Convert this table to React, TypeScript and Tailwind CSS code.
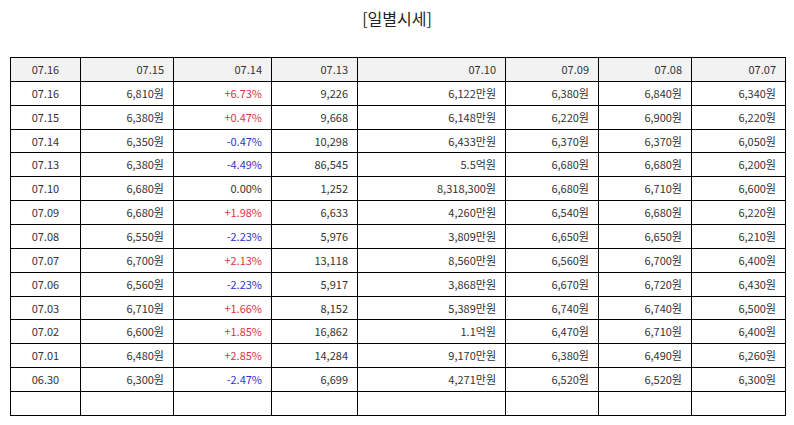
const head = ["07.16", "07.15", "07.14", "07.13", "07.10", "07.09", "07.08", "07.07"];

type Row = [string, string, string, string, string, string, string, string];

const rows: Row[] = [
  ["07.16", "6,810원", "+6.73%", "9,226", "6,122만원", "6,380원", "6,840원", "6,340원"],
  ["07.15", "6,380원", "+0.47%", "9,668", "6,148만원", "6,220원", "6,900원", "6,220원"],
  ["07.14", "6,350원", "-0.47%", "10,298", "6,433만원", "6,370원", "6,370원", "6,050원"],
  ["07.13", "6,380원", "-4.49%", "86,545", "5.5억원", "6,680원", "6,680원", "6,200원"],
  ["07.10", "6,680원", "0.00%", "1,252", "8,318,300원", "6,680원", "6,710원", "6,600원"],
  ["07.09", "6,680원", "+1.98%", "6,633", "4,260만원", "6,540원", "6,680원", "6,220원"],
  ["07.08", "6,550원", "-2.23%", "5,976", "3,809만원", "6,650원", "6,650원", "6,210원"],
  ["07.07", "6,700원", "+2.13%", "13,118", "8,560만원", "6,560원", "6,700원", "6,400원"],
  ["07.06", "6,560원", "-2.23%", "5,917", "3,868만원", "6,670원", "6,720원", "6,430원"],
  ["07.03", "6,710원", "+1.66%", "8,152", "5,389만원", "6,740원", "6,740원", "6,500원"],
  ["07.02", "6,600원", "+1.85%", "16,862", "1.1억원", "6,470원", "6,710원", "6,400원"],
  ["07.01", "6,480원", "+2.85%", "14,284", "9,170만원", "6,380원", "6,490원", "6,260원"],
  ["06.30", "6,300원", "-2.47%", "6,699", "4,271만원", "6,520원", "6,520원", "6,300원"],
];

const widths = ["w-[70px]", "w-[93px]", "w-[98px]", "w-[86px]", "w-[148px]", "w-[93px]", "w-[93px]", "w-[94px]"];

function rateColor(v: string) {
  if (v.startsWith("+")) return "text-[#e0333f]";
  if (v.startsWith("-")) return "text-[#3333cc]";
  return "text-[#333]";
}

function Cell({ value, col }: { value: string; col: number }) {
  const align = col === 0 ? "text-center" : "text-right pr-[9px]";
  const color = col === 2 ? rateColor(value) : "text-[#333]";
  return <td className={`border border-black h-[23.87px] p-0 leading-none ${align} ${color}`}>{value}</td>;
}

export default function App() {
  return (
    <div className="w-[794px] h-[425px] bg-white font-['Noto_Sans_CJK_KR','Noto_Sans',sans-serif] text-[#333]">
      <div className="pt-[7px] h-[57px] text-center text-[16px] text-[#222] leading-[22px]">[일별시세]</div>
      <div className="px-[10px]">
        <table className="border-collapse table-fixed w-[775px] text-[11px]">
          <colgroup>
            {widths.map((w, i) => (
              <col key={i} className={w} />
            ))}
          </colgroup>
          <thead>
            <tr>
              {head.map((h, i) => (
                <td
                  key={h}
                  className={`border border-black bg-[#f2f2f2] h-[23.87px] p-0 leading-none ${i === 0 ? "text-center" : "text-right pr-[9px]"}`}
                >
                  {h}
                </td>
              ))}
            </tr>
          </thead>
          <tbody>
            {rows.map((r) => (
              <tr key={r[0]}>
                {r.map((v, i) => (
                  <Cell key={i} value={v} col={i} />
                ))}
              </tr>
            ))}
            <tr>
              {head.map((h) => (
                <td key={h} className="border border-black h-[23.87px] p-0" />
              ))}
            </tr>
          </tbody>
        </table>
      </div>
    </div>
  );
}
